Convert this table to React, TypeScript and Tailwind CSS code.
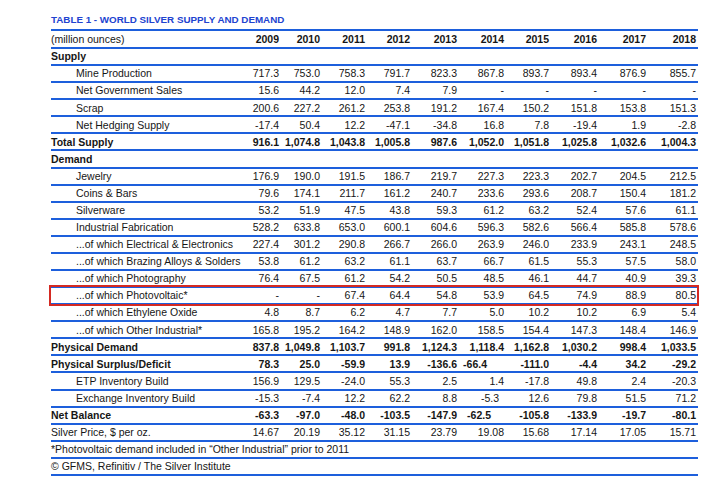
import React from "react";

type RowDef = {
  label: string;
  values?: string[];
  bold?: boolean;
  indent?: boolean;
  highlight?: boolean;
  full?: boolean;
  shift?: Record<number, string>;
};

const rows: RowDef[] = [
  { label: "Supply", bold: true },
  { label: "Mine Production", indent: true, values: ["717.3", "753.0", "758.3", "791.7", "823.3", "867.8", "893.7", "893.4", "876.9", "855.7"] },
  { label: "Net Government Sales", indent: true, values: ["15.6", "44.2", "12.0", "7.4", "7.9", "-", "-", "-", "-", "-"] },
  { label: "Scrap", indent: true, values: ["200.6", "227.2", "261.2", "253.8", "191.2", "167.4", "150.2", "151.8", "153.8", "151.3"] },
  { label: "Net Hedging Supply", indent: true, values: ["-17.4", "50.4", "12.2", "-47.1", "-34.8", "16.8", "7.8", "-19.4", "1.9", "-2.8"] },
  { label: "Total Supply", bold: true, values: ["916.1", "1,074.8", "1,043.8", "1,005.8", "987.6", "1,052.0", "1,051.8", "1,025.8", "1,032.6", "1,004.3"] },
  { label: "Demand", bold: true },
  { label: "Jewelry", indent: true, values: ["176.9", "190.0", "191.5", "186.7", "219.7", "227.3", "223.3", "202.7", "204.5", "212.5"] },
  { label: "Coins & Bars", indent: true, values: ["79.6", "174.1", "211.7", "161.2", "240.7", "233.6", "293.6", "208.7", "150.4", "181.2"] },
  { label: "Silverware", indent: true, values: ["53.2", "51.9", "47.5", "43.8", "59.3", "61.2", "63.2", "52.4", "57.6", "61.1"] },
  { label: "Industrial Fabrication", indent: true, values: ["528.2", "633.8", "653.0", "600.1", "604.6", "596.3", "582.6", "566.4", "585.8", "578.6"] },
  { label: "...of which Electrical & Electronics", indent: true, values: ["227.4", "301.2", "290.8", "266.7", "266.0", "263.9", "246.0", "233.9", "243.1", "248.5"] },
  { label: "...of which Brazing Alloys & Solders", indent: true, values: ["53.8", "61.2", "63.2", "61.1", "63.7", "66.7", "61.5", "55.3", "57.5", "58.0"] },
  { label: "...of which Photography", indent: true, values: ["76.4", "67.5", "61.2", "54.2", "50.5", "48.5", "46.1", "44.7", "40.9", "39.3"] },
  { label: "...of which Photovoltaic*", indent: true, highlight: true, values: ["-", "-", "67.4", "64.4", "54.8", "53.9", "64.5", "74.9", "88.9", "80.5"] },
  { label: "...of which Ethylene Oxide", indent: true, values: ["4.8", "8.7", "6.2", "4.7", "7.7", "5.0", "10.2", "10.2", "6.9", "5.4"] },
  { label: "...of which Other Industrial*", indent: true, values: ["165.8", "195.2", "164.2", "148.9", "162.0", "158.5", "154.4", "147.3", "148.4", "146.9"] },
  { label: "Physical Demand", bold: true, values: ["837.8", "1,049.8", "1,103.7", "991.8", "1,124.3", "1,118.4", "1,162.8", "1,030.2", "998.4", "1,033.5"] },
  { label: "Physical Surplus/Deficit", bold: true, shift: { 5: "pr-[17px]" }, values: ["78.3", "25.0", "-59.9", "13.9", "-136.6", "-66.4", "-111.0", "-4.4", "34.2", "-29.2"] },
  { label: "ETP Inventory Build", indent: true, values: ["156.9", "129.5", "-24.0", "55.3", "2.5", "1.4", "-17.8", "49.8", "2.4", "-20.3"] },
  { label: "Exchange Inventory Build", indent: true, shift: { 5: "pr-[5px]" }, values: ["-15.3", "-7.4", "12.2", "62.2", "8.8", "-5.3", "12.6", "79.8", "51.5", "71.2"] },
  { label: "Net Balance", bold: true, shift: { 5: "pr-[13px]" }, values: ["-63.3", "-97.0", "-48.0", "-103.5", "-147.9", "-62.5", "-105.8", "-133.9", "-19.7", "-80.1"] },
  { label: "Silver Price, $ per oz.", values: ["14.67", "20.19", "35.12", "31.15", "23.79", "19.08", "15.68", "17.14", "17.05", "15.71"] },
  { label: "*Photovoltaic demand included in \u201cOther Industrial\u201d prior to 2011", full: true },
  { label: "\u00a9 GFMS, Refinitiv / The Silver Institute", full: true },
];

const years = ["2009", "2010", "2011", "2012", "2013", "2014", "2015", "2016", "2017", "2018"];

const gridCols =
  "grid grid-cols-[187px_41px_41px_45px_45px_47px_47px_45px_48px_49px_50px] pr-[2px]";

function Row({ r }: { r: RowDef }) {
  const weight = r.bold ? "font-bold" : "font-normal";
  return (
    <div
      className={`relative ${gridCols} h-[17.08px] items-center border-b-2 border-[#1d5fdc] ${weight}`}
    >
      {r.full ? (
        <div className="col-span-11 whitespace-nowrap">{r.label}</div>
      ) : (
        <>
          <div className={`whitespace-nowrap ${r.indent ? "pl-[25px]" : ""}`}>{r.label}</div>
          {years.map((y, i) => (
            <div key={y} className={`text-right whitespace-nowrap ${r.shift && r.shift[i] ? r.shift[i] : ""}`}>
              {r.values ? r.values[i] : ""}
            </div>
          ))}
        </>
      )}
      {r.highlight && (
        <div className="absolute left-[-2px] right-[-1px] top-[-3px] bottom-[-3px] border-2 border-[#d42a22]" />
      )}
    </div>
  );
}

export default function App() {
  return (
    <div className="w-[720px] h-[480px] overflow-hidden bg-white pl-[51px] pt-[12px] text-[#161616] text-[10.5px] leading-none [font-family:'Liberation_Sans',Arial,sans-serif]">
      <div className="h-[15px] leading-[15px] text-[9.8px] font-bold text-[#2143d0] whitespace-nowrap">
        TABLE 1 - WORLD SILVER SUPPLY AND DEMAND
      </div>
      <div className="mt-[2px] w-[647px] border-t-2 border-[#1d5fdc]">
        <div className={`${gridCols} h-[18px] items-center border-b-2 border-[#1d5fdc]`}>
          <div className="whitespace-nowrap">(million ounces)</div>
          {years.map((y) => (
            <div key={y} className="text-right font-bold">
              {y}
            </div>
          ))}
        </div>
        {rows.map((r) => (
          <Row key={r.label} r={r} />
        ))}
      </div>
    </div>
  );
}
